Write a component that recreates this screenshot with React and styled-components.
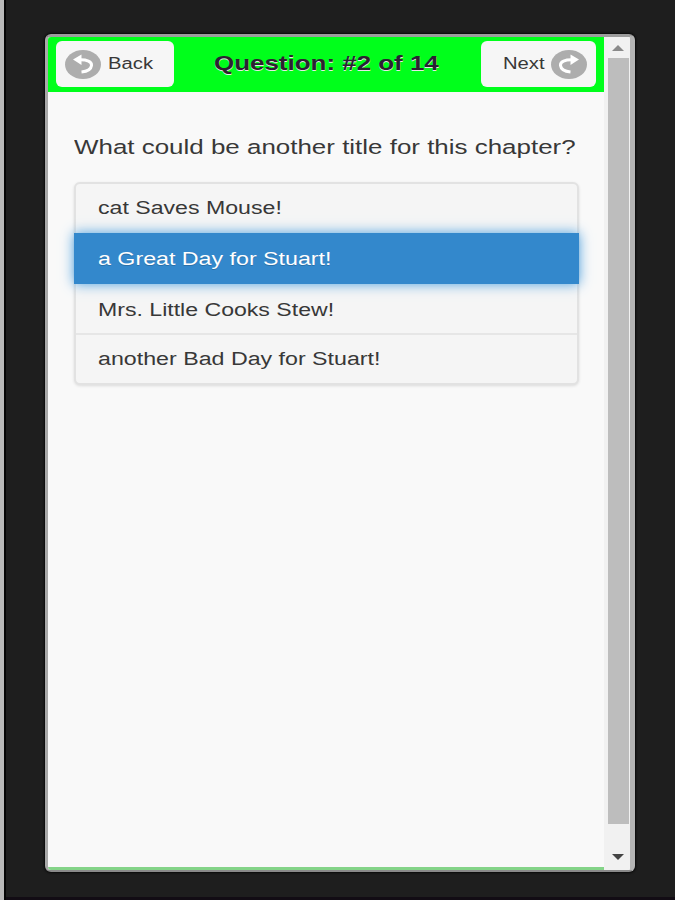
import React from "react";
import styled, { createGlobalStyle } from "styled-components";

const GlobalStyle = createGlobalStyle`
  * { box-sizing: border-box; }
  body {
    margin: 0;
    background: #1e1e1e;
    font-family: "Liberation Sans", Arial, sans-serif;
    color: #383838;
  }
`;

const Stage = styled.div`
  width: 675px;
  height: 900px;
  padding: 34px 0 0 45px;
  overflow: hidden;
  background: #1e1e1e;
  box-shadow:
    inset 4px 0 0 #b9b9b9,
    inset 6px 0 0 #050505,
    inset 0 -3px 0 #120c14;
`;

const Device = styled.div`
  display: flex;
  width: 590px;
  height: 838px;
  overflow: hidden;
  border: solid;
  border-width: 3px 5px 2px 3px;
  border-color: #9c9c9c #b4b4b4 #8a8a8a #a8a8a8;
  border-radius: 6px;
  background: #f9f9f9;
  box-shadow: 0 0 2px 1px #0a0a0a;
`;

const Page = styled.div`
  display: flex;
  flex-direction: column;
  width: 556px;
  border-bottom: 3px solid #84d488;
`;

const Header = styled.header`
  display: flex;
  justify-content: space-between;
  height: 55px;
  padding: 4px 8px;
  background: #00ff1b;
`;

const NavButton = styled.button`
  display: flex;
  align-items: center;
  width: ${(p) => p.$width}px;
  height: 46px;
  padding: 0 ${(p) => p.$padRight}px 0 ${(p) => p.$padLeft}px;
  border: 0;
  border-radius: 6px;
  background: #f6f6f6;
  font: inherit;
  color: inherit;
`;

const Wide = styled.span`
  display: block;
  width: ${(p) => (p.$width ? `${p.$width}px` : "auto")};
  font-size: ${(p) => p.$size}px;
  font-weight: ${(p) => (p.$bold ? 700 : 400)};
  line-height: 24px;
  text-align: left;
  white-space: nowrap;
  transform: scaleX(1.265);
  transform-origin: left center;
`;

const Title = styled.h1`
  flex: 1;
  margin: 0;
  padding: 10px 0 0 40px;
  text-shadow: 0 1px 0 #e8e8e8;
  color: #2b2230;
`;

const Icon = styled.svg`
  display: block;
  flex: none;
  width: 36px;
  height: 29px;
`;

const Content = styled.main`
  padding: 43px 25px 0 26px;
`;

const Options = styled.ul`
  margin: 23px 0 0;
  padding: 0;
  list-style: none;
  width: 505px;
  border: 2px solid #e2e2e2;
  border-radius: 6px;
  background: #f5f5f5;
  box-shadow: 0 1px 3px rgba(0, 0, 0, 0.12);
`;

const Option = styled.li`
  height: ${(p) => p.$height}px;
  padding: ${(p) => p.$top}px 0 0 22px;
  border-top: ${(p) => (p.$divided ? "2px solid #e6e6e6" : "0")};
`;

const SelectedOption = styled(Option)`
  position: relative;
  margin: 0 -2px;
  padding-left: 24px;
  background: #3388cc;
  color: #fff;
  text-shadow: 0 1px 0 #2b70a8;
  box-shadow: 0 0 12px #4a9fdf;
`;

const Scrollbar = styled.div`
  display: flex;
  flex-direction: column;
  align-items: center;
  width: 26px;
  background: #f1f1f1;
`;

const ScrollArrow = styled.div`
  display: flex;
  justify-content: center;
  align-items: center;
  height: ${(p) => p.$height}px;
`;

const ArrowDrawing = styled.svg`
  display: block;
  margin-left: 2px;
  width: 12px;
  height: 6px;
`;

const Thumb = styled.div`
  width: 21px;
  height: 766px;
  margin-left: 2px;
  background: #bdbdbd;
`;

const Spacer = styled.div`
  flex: 1;
`;

function TurnIcon({ flip }) {
  return (
    <Icon viewBox="0 0 36 29">
      <ellipse cx="18" cy="14.5" rx="18" ry="14.5" fill="#adadad" />
      <g transform={flip ? "translate(36 0) scale(-1 1)" : undefined}>
        <path d="M8 9.5 L16.5 4.5 V15 Z" fill="#fff" />
        <path
          d="M14 9.8 C22 9.5 27 11.5 26.5 15.5 C26 19.5 22 21.5 16.5 22"
          fill="none"
          stroke="#fff"
          strokeWidth="3"
        />
      </g>
    </Icon>
  );
}

export default function App() {
  return (
    <>
      <GlobalStyle />
      <Stage>
        <Device>
          <Page>
            <Header>
              <NavButton $width={118} $padLeft={9} $padRight={0}>
                <TurnIcon />
                <Spacer />
                <Wide $size={16} $width={66}>
                  Back
                </Wide>
              </NavButton>
              <Title>
                <Wide $size={20.5} $bold>
                  Question: #2 of 14
                </Wide>
              </Title>
              <NavButton $width={115} $padLeft={22} $padRight={9.5}>
                <Wide $size={16}>Next</Wide>
                <Spacer />
                <TurnIcon flip />
              </NavButton>
            </Header>
            <Content>
              <Wide $size={20.5}>What could be another title for this chapter?</Wide>
              <Options>
                <Option $height={48.5} $top={12}>
                  <Wide $size={18.3}>cat Saves Mouse!</Wide>
                </Option>
                <SelectedOption $height={51} $top={14}>
                  <Wide $size={18.35}>a Great Day for Stuart!</Wide>
                </SelectedOption>
                <Option $height={49.5} $top={14}>
                  <Wide $size={18.25}>Mrs. Little Cooks Stew!</Wide>
                </Option>
                <Option $height={50} $top={12} $divided>
                  <Wide $size={18.35}>another Bad Day for Stuart!</Wide>
                </Option>
              </Options>
            </Content>
          </Page>
          <Scrollbar>
            <ScrollArrow $height={21}>
              <ArrowDrawing viewBox="0 0 12 6">
                <path d="M0 6 L6 0 L12 6 Z" fill="#8a8a8a" />
              </ArrowDrawing>
            </ScrollArrow>
            <Thumb />
            <Spacer />
            <ScrollArrow $height={26}>
              <ArrowDrawing viewBox="0 0 12 6">
                <path d="M0 0 L12 0 L6 6 Z" fill="#444" />
              </ArrowDrawing>
            </ScrollArrow>
          </Scrollbar>
        </Device>
      </Stage>
    </>
  );
}
